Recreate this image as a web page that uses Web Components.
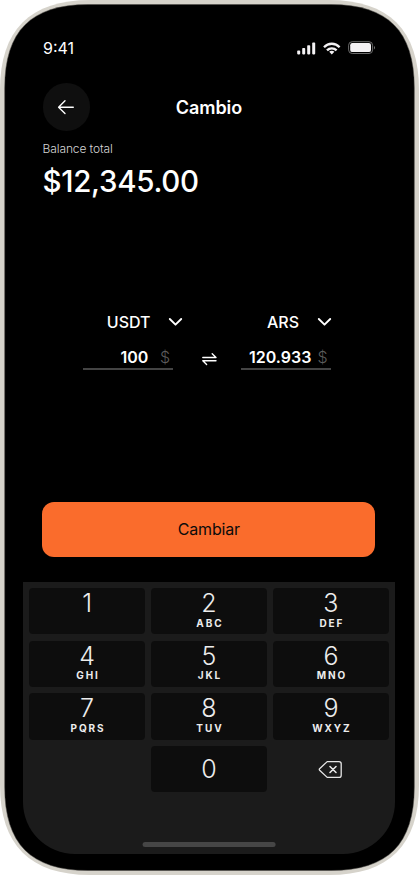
<!DOCTYPE html>
<html lang="es">
<head>
<meta charset="utf-8">
<title>Cambio</title>
<style>
html,body{margin:0;background:#fff}
body{font-family:Inter,"Liberation Sans",sans-serif;color:#fff;width:419px;height:876px;overflow:hidden}
</style>
</head>
<body>
<exchange-app></exchange-app>
<script>
const define = (name, html) => customElements.define(name, class extends HTMLElement {
  constructor() {
    super();
    const t = document.createElement('template');
    t.innerHTML = html;
    this.attachShadow({mode: 'open'}).append(t.content.cloneNode(true));
  }
});

define('phone-frame', `
<style>
:host{display:grid;width:419px;height:876px}
svg,.screen{grid-area:1/1}
.screen{display:flex;flex-direction:column;min-width:0}
</style>
<svg width="419" height="876" viewBox="0 0 419 876">
<path fill="#d6d3cb" d="M0 90C0 30 30 0 90 0H329C389 0 419 30 419 90V785C419 845 389 875 329 875H90C30 875 0 845 0 785Z"/>
<path fill="#000" stroke="#4a4845" stroke-width=".5" d="M4.7 88C4.7 31 31 4.5 88 4.5H331C388 4.5 414.3 31 414.3 88V787C414.3 844 388 870.5 331 870.5H88C31 870.5 4.7 844 4.7 787Z"/>
</svg>
<div class="screen"><slot></slot></div>`);

define('status-bar', `
<style>
:host{display:flex;justify-content:space-between;padding:38px 43px 0 43px;height:20px;line-height:20px;font-size:16px;font-weight:400}
svg{display:block;margin-top:1px}
</style>
<span>9:41</span>
<svg width="80" height="18" viewBox="296 39 80 18" fill="#f4f2f4">
<rect x="297.2" y="50.6" width="3" height="3.8" rx=".8"/><rect x="302.2" y="48" width="3" height="6.4" rx=".8"/><rect x="307.2" y="45.2" width="3" height="9.2" rx=".8"/><rect x="312.2" y="42.6" width="3" height="11.8" rx=".8"/>
<g fill="none" stroke="#f4f2f4" stroke-width="2.3"><path d="M324 47.2C328.3 42.6 335.3 42.6 339.6 47.2"/><path d="M327 50.4C329.6 47.6 334 47.6 336.6 50.4"/></g>
<path d="M329.2 51.8C330.6 50.3 333 50.3 334.4 51.8L331.8 54.5Z"/>
<rect x="348.6" y="41.7" width="24" height="11.8" rx="3.6" fill="none" stroke="#777" stroke-width=".9"/>
<rect x="350.2" y="43.1" width="20.8" height="9" rx="2.2"/><path d="M374 46.1Q376 47.8 374 49.5Z" fill="#777"/>
</svg>`);

define('title-bar', `
<style>
:host{display:grid;grid-template-columns:48px 1fr 48px;align-items:center;margin:25px 43.5px 0 42.5px;height:48px}
button{all:unset;display:grid;place-items:center;width:47.6px;height:47.6px;border-radius:50%;background:#0f0f0f}
h1{margin:0;text-align:center;font-size:18px;line-height:24px;font-weight:600;letter-spacing:-.05px;padding-top:1px}
</style>
<button aria-label="Volver"><svg width="18" height="16" viewBox="0 0 18 16" fill="none" stroke="#fff" stroke-width="1.35" stroke-linecap="round" stroke-linejoin="round"><path d="M16.3 8.2H1.8M8 1.8L1.6 8.2L8 14.6"/></svg></button>
<h1><slot></slot></h1>`);

define('balance-total', `
<style>
:host{display:block;margin:9px 42px 0 42.5px;height:62px}
small{display:block;font-size:12px;line-height:18px;font-weight:300;color:#d5d5d5;letter-spacing:-.1px}
strong{display:block;font-size:29.5px;line-height:42px;font-weight:500;margin-top:2px;letter-spacing:-.3px}
</style>
<small><slot name="label"></slot></small><strong><slot></slot></strong>`);

define('currency-field', `
<style>
:host{display:block;width:103px}
.pick{display:flex;justify-content:flex-end;align-items:center;width:var(--pick-width,100px);height:20px;font-size:16px;font-weight:500;gap:17.5px}
.amount{display:flex;justify-content:flex-end;width:87px;height:21px;line-height:20px;padding:0 3px 0 0;margin-top:15px;border-bottom:2px solid #444;font-size:16px;font-weight:600}
i{font-style:normal;font-weight:300;color:#5c5c5c;margin-left:var(--unit-gap,6px)}
</style>
<div class="pick"><slot name="code"></slot><svg width="15" height="10" viewBox="0 0 15 10" fill="none" stroke="#fff" stroke-width="1.9" stroke-linecap="round" stroke-linejoin="round"><path d="M1.8 2L7.5 7.7L13.2 2"/></svg></div>
<div class="amount"><slot></slot><i>$</i></div>`);

define('swap-row', `
<style>
:host{display:flex;margin:110px 0 0 83px;height:59px}
svg{margin:40px 23px 0 14.5px;flex:none}
</style>
<slot name="from"></slot>
<svg width="17" height="15" viewBox="0 0 17 15" fill="none" stroke="#fff" stroke-width="1.4" stroke-linecap="round" stroke-linejoin="round"><path d="M1.8 5.5H15L11.2 1.8M15 8.8H1.8L5.6 12.5"/></svg>
<slot name="to"></slot>`);

define('primary-button', `
<style>
:host{display:block;margin:130.7px 43.7px 0 42.3px}
button{all:unset;display:grid;place-items:center;width:100%;height:55.5px;border-radius:12px;background:#fa6c2c;color:#0b0b0b;font-size:16px;font-weight:400;letter-spacing:-.2px}
</style>
<button><slot></slot></button>`);

define('pad-key', `
<style>
:host{display:flex;flex-direction:column;align-items:center;height:46.3px;border-radius:4px;background:#0d0d0d;color:#ececec;font-size:25px;line-height:30px;font-weight:300}
:host([zero]){justify-content:center;grid-column:2}
:host([clear]){justify-content:center;background:none}
::slotted(small){display:block;font-size:10px;line-height:12px;font-weight:700;letter-spacing:1.9px;margin:-1.3px -1.9px 0 0}
</style><slot></slot>`);

define('number-pad', `
<style>
:host{display:flex;flex-direction:column;width:372px;height:272px;box-sizing:border-box;margin:24.8px 0 0 23px;padding:6px 5.7px 7px;background:#1b1b1b;border-radius:0 0 52px 52px}
.keys{display:grid;grid-template-columns:repeat(3,1fr);gap:6.4px 5.2px}
.home{width:133px;height:5px;border-radius:3px;background:#464646;margin:auto auto 0;translate:-.4px 0}
</style>
<div class="keys"><slot></slot></div><div class="home"></div>`);

define('exchange-app', `
<style>:host{display:block}</style>
<phone-frame>
<status-bar></status-bar>
<title-bar>Cambio</title-bar>
<balance-total><span slot="label">Balance total</span>$12,345.00</balance-total>
<swap-row>
<currency-field slot="from" style="--unit-gap:11.5px"><span slot="code">USDT</span>100</currency-field>
<currency-field slot="to" style="--pick-width:91px"><span slot="code">ARS</span>120.933</currency-field>
</swap-row>
<primary-button>Cambiar</primary-button>
<number-pad>
<pad-key>1</pad-key><pad-key>2<small>ABC</small></pad-key><pad-key>3<small>DEF</small></pad-key>
<pad-key>4<small>GHI</small></pad-key><pad-key>5<small>JKL</small></pad-key><pad-key>6<small>MNO</small></pad-key>
<pad-key>7<small>PQRS</small></pad-key><pad-key>8<small>TUV</small></pad-key><pad-key>9<small>WXYZ</small></pad-key>
<pad-key zero>0</pad-key>
<pad-key clear><svg width="25" height="19" viewBox="0 0 25 19" fill="none" stroke="#e6e6e6" stroke-width="1.3" stroke-linejoin="round" stroke-linecap="round"><path d="M9.2 1.6H21Q23.2 1.6 23.2 3.8V15.2Q23.2 17.4 21 17.4H9.2L1.6 10.2Q.9 9.5 1.6 8.8Z"/><path stroke-width="1.6" d="M12 6.5L18 12.5M18 6.5L12 12.5"/></svg></pad-key>
</number-pad>
</phone-frame>`);
</script>
</body>
</html>
